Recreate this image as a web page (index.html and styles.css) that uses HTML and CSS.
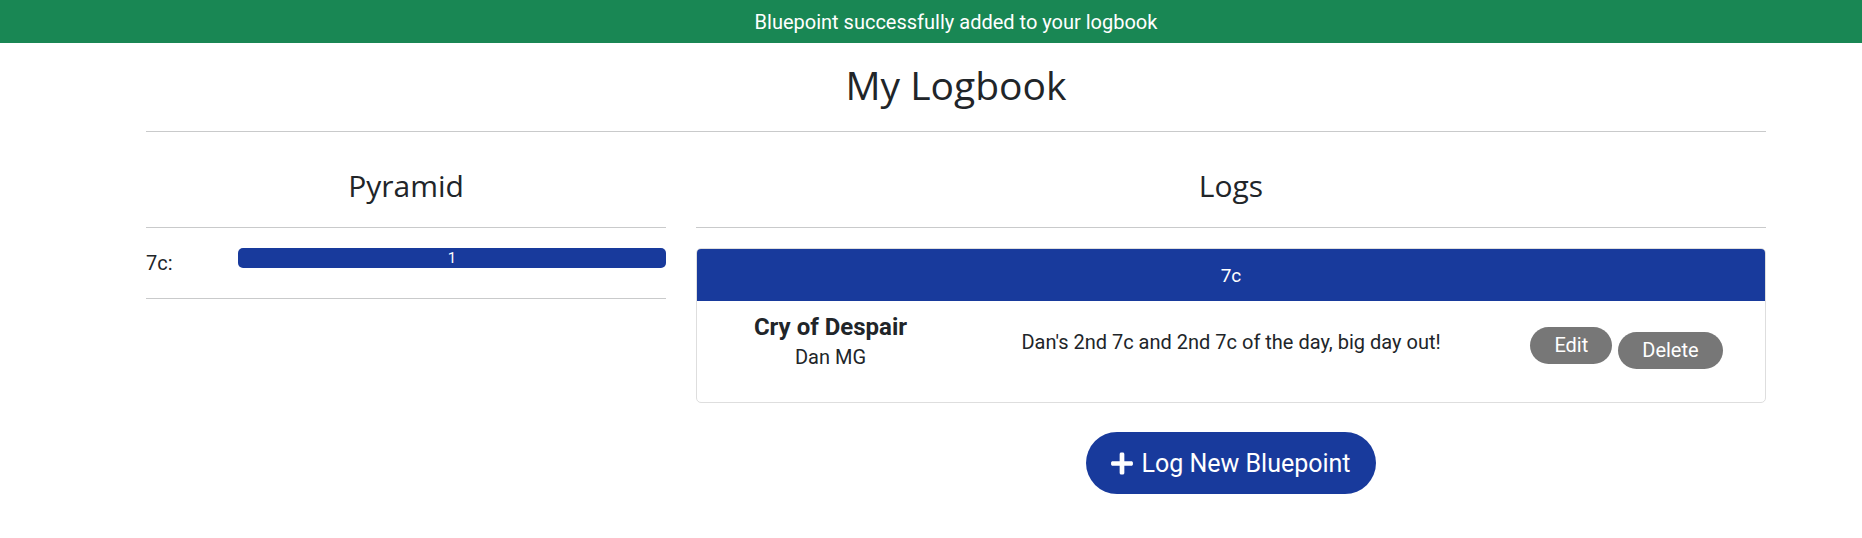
FILE: index.html
```html
<!DOCTYPE html>
<html lang="en">
<head>
<meta charset="utf-8">
<title>My Logbook</title>
<link rel="stylesheet" href="styles.css">
</head>
<body>
<div class="page">
  <div class="alert">Bluepoint successfully added to your logbook</div>
  <main class="container">
    <h1 class="title">My Logbook</h1>
    <hr class="rule">
    <div class="columns">
      <section class="pyramid">
        <h2 class="col-title">Pyramid</h2>
        <hr class="rule">
        <div class="pyr-row">
          <span class="grade">7c:</span>
          <div class="track"><div class="bar" style="width:100%">1</div></div>
        </div>
        <hr class="rule">
      </section>
      <section class="logs">
        <h2 class="col-title">Logs</h2>
        <hr class="rule">
        <div class="card">
          <div class="card-header">7c</div>
          <div class="card-body">
            <div class="climb">
              <div class="climb-name">Cry of Despair</div>
              <div class="climber">Dan MG</div>
            </div>
            <div class="desc">Dan's 2nd 7c and 2nd 7c of the day, big day out!</div>
            <div class="actions">
              <button class="btn btn-edit">Edit</button>
              <button class="btn btn-delete">Delete</button>
            </div>
          </div>
        </div>
        <div class="add-wrap">
          <button class="btn-add">
            <svg class="plus" viewBox="0 0 448 512" width="22" height="25" aria-hidden="true"><path fill="#fff" d="M416 208H272V64c0-17.670-14.330-32-32-32h-32c-17.670 0-32 14.330-32 32v144H32c-17.670 0-32 14.330-32 32v32c0 17.670 14.330 32 32 32h144v144c0 17.670 14.330 32 32 32h32c17.670 0 32-14.330 32-32V304h144c17.670 0 32-14.330 32-32v-32c0-17.670-14.330-32-32-32z"/></svg>
            <span>Log New Bluepoint</span>
          </button>
        </div>
      </section>
    </div>
  </main>
</div>
</body>
</html>
```

FILE: styles.css
```css
html, body {
  margin: 0;
  padding: 0;
  overflow: hidden;
  background: #fff;
}

body {
  font-family: Roboto, "Liberation Sans", sans-serif;
  color: #212529;
}

.page {
  width: 1912px;
}

.alert {
  background: #198754;
  color: #fff;
  height: 43px;
  display: flex;
  align-items: center;
  justify-content: center;
  font-size: 20px;
}

.container {
  width: 1620px;
  margin: 0 auto;
}

.title {
  font-family: "Open Sans", "Noto Sans", sans-serif;
  font-weight: 400;
  font-size: 39px;
  line-height: 48px;
  margin: 18px 0 22px;
  text-align: center;
  color: #212529;
}

.rule {
  border: 0;
  border-top: 1px solid #c9cacb;
  margin: 0;
  height: 0;
}

.columns {
  display: flex;
  gap: 30px;
  margin-top: 35px;
}

.pyramid {
  width: 520px;
  flex: none;
}

.logs {
  flex: 1;
  min-width: 0;
}

.col-title {
  font-family: "Open Sans", "Noto Sans", sans-serif;
  font-weight: 400;
  font-size: 30px;
  line-height: 38px;
  margin: 0 0 22px;
  text-align: center;
  color: #212529;
}

.pyr-row {
  display: flex;
  align-items: flex-start;
  padding: 20px 0 23px;
}

.grade {
  width: 92px;
  flex: none;
  font-size: 20px;
  line-height: 24px;
  margin-top: 3px;
}

.track {
  flex: 1;
  height: 20px;
  border-radius: 5px;
  background: #e9ecef;
  overflow: hidden;
  display: flex;
}

.bar {
  background: #183a9c;
  color: #fff;
  font-size: 15px;
  line-height: 20px;
  text-align: center;
}

.card {
  margin-top: 20px;
  border: 1px solid #dedede;
  border-radius: 5px;
  overflow: hidden;
}

.card-header {
  background: #183a9c;
  color: #fff;
  height: 52px;
  display: flex;
  align-items: center;
  justify-content: center;
  font-size: 19px;
}

.card-body {
  display: grid;
  grid-template-columns: 1fr 2fr 1fr;
  padding: 12px 0 31px;
}

.climb {
  text-align: center;
}

.climb-name {
  font-weight: 700;
  font-size: 24px;
  line-height: 28px;
}

.climber {
  font-size: 20px;
  line-height: 28px;
  margin-top: 2px;
}

.desc {
  text-align: center;
  font-size: 20px;
  line-height: 28px;
  align-self: center;
}

.actions {
  display: flex;
  justify-content: center;
  align-items: flex-start;
  gap: 6px;
  margin-top: 14px;
  padding-right: 10px;
}

.btn {
  border: 0;
  background: #777;
  color: #fff;
  font-family: Roboto, "Liberation Sans", sans-serif;
  font-size: 20px;
  line-height: 30px;
  padding: 3px 24px 4px;
  border-radius: 19px;
}

.btn-delete {
  margin-top: 5px;
}

.add-wrap {
  display: flex;
  justify-content: center;
  margin-top: 29px;
}

.btn-add {
  display: flex;
  align-items: center;
  gap: 8px;
  height: 62px;
  padding: 0 25px;
  border: 0;
  border-radius: 31px;
  background: #183a9c;
  color: #fff;
  font-family: Roboto, "Liberation Sans", sans-serif;
  font-size: 25px;
}

.plus {
  display: block;
}
```
